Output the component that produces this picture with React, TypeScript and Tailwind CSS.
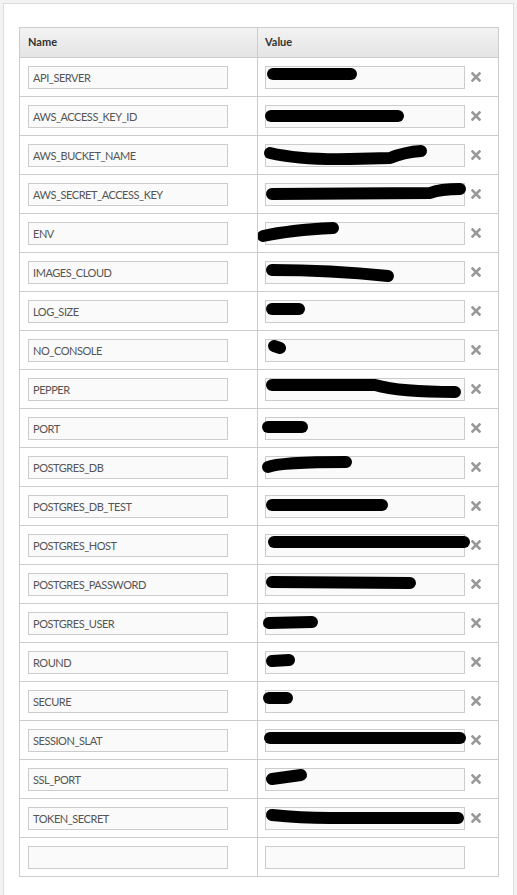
import React from 'react';

// redaction strokes, drawn in value-cell coordinates (cell is 240 x 38)
const vars = [
  { name: 'API_SERVER', mark: 'M 15 16 L 93 16' },
  { name: 'AWS_ACCESS_KEY_ID', mark: 'M 13 19 L 140 19' },
  { name: 'AWS_BUCKET_NAME', mark: 'M 12 17 Q 42 24 92 23 L 132 22 Q 147 16 163 15' },
  { name: 'AWS_SECRET_ACCESS_KEY', mark: 'M 14 19 L 172 18 Q 182 14 202 14' },
  { name: 'ENV', mark: 'M 5 22 Q 32 16 75 14' },
  { name: 'IMAGES_CLOUD', mark: 'M 14 17 Q 72 17 130 23' },
  { name: 'LOG_SIZE', mark: 'M 14 17 L 41 17' },
  { name: 'NO_CONSOLE', mark: 'M 16 15 L 22 17' },
  { name: 'PEPPER', mark: 'M 14 15 L 117 15 Q 142 22 197 22' },
  { name: 'PORT', mark: 'M 10 18 L 44 18' },
  { name: 'POSTGRES_DB', mark: 'M 10 19 Q 22 14 88 14' },
  { name: 'POSTGRES_DB_TEST', mark: 'M 14 18 L 124 18' },
  { name: 'POSTGRES_HOST', mark: 'M 16 16 L 206 16' },
  { name: 'POSTGRES_PASSWORD', mark: 'M 14 17 L 152 18' },
  { name: 'POSTGRES_USER', mark: 'M 11 19 L 54 18' },
  { name: 'ROUND', mark: 'M 14 18 L 31 17' },
  { name: 'SECURE', mark: 'M 11 16 L 29 16' },
  { name: 'SESSION_SLAT', mark: 'M 12 17 L 202 17' },
  { name: 'SSL_PORT', mark: 'M 14 19 L 43 15' },
  { name: 'TOKEN_SECRET', mark: 'M 14 16 Q 42 19 72 19 L 200 19' },
];

const RemoveIcon = () => (
  <svg width="10" height="10" viewBox="0 0 10 10" className="shrink-0">
    <path d="M 1.5 1.5 L 8.5 8.5 M 8.5 1.5 L 1.5 8.5" stroke="#999" strokeWidth="2.6" strokeLinecap="square" />
  </svg>
);

const Field = ({ value }: { value: string }) => (
  <div className="w-[200px] h-[23px] border border-[#cccccc] bg-[#fafafa] px-[4px] flex items-center text-[11px] tracking-[-0.45px] text-[#555] leading-none whitespace-nowrap overflow-hidden">
    {value}
  </div>
);

export default function App() {
  return (
    <div className="h-[895px] overflow-hidden bg-[#f3f3f3] pt-[3px] pl-[3px]" style={{ fontFamily: 'Lato, "Liberation Sans", sans-serif' }}>
      <div className="w-[511px] min-h-[920px] bg-white border border-[#dddddd] pt-[23px] pl-[15px]">
        <div className="w-[480px] border border-[#cccccc]">
          <div className="flex h-[30px] border-b border-[#cccccc] bg-gradient-to-b from-[#f3f3f3] to-[#e4e4e4] text-[11px] font-bold text-[#333]">
            <div className="w-[238px] border-r border-[#cccccc] pl-[8px] flex items-center">Name</div>
            <div className="flex-1 pl-[7px] flex items-center">Value</div>
          </div>
          {[...vars, { name: '', mark: '' }].map((v, i) => (
            <div key={i} className="flex h-[39px] border-b border-[#cccccc] last:border-b-0 last:h-[38px]">
              <div className="w-[238px] border-r border-[#cccccc] pl-[8px] flex items-center">
                <Field value={v.name} />
              </div>
              <div className="relative flex-1 pl-[7px] flex items-center gap-[6px]">
                <Field value="" />
                {v.mark && <RemoveIcon />}
                {v.mark && (
                  <svg className="absolute left-0 top-0 pointer-events-none" width="240" height="38" viewBox="0 0 240 38">
                    <path d={v.mark} stroke="#000" strokeWidth="12" strokeLinecap="round" strokeLinejoin="round" fill="none" />
                  </svg>
                )}
              </div>
            </div>
          ))}
        </div>
      </div>
    </div>
  );
}
